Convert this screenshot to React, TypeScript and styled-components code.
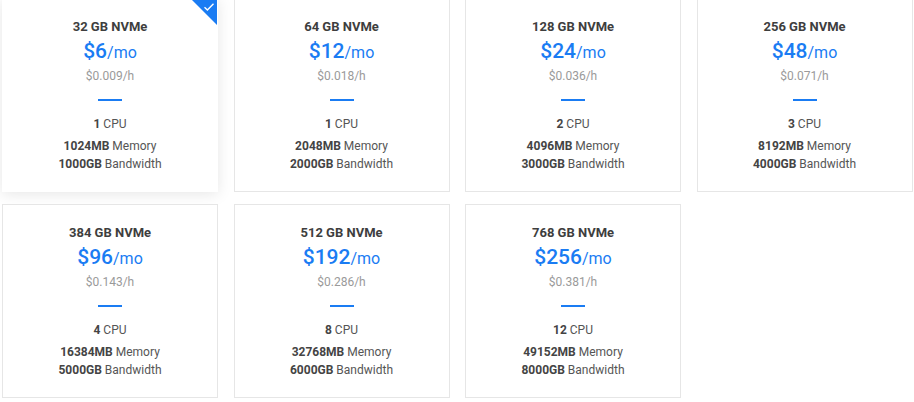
import React from "react";
import styled, { createGlobalStyle, css } from "styled-components";

const Global = createGlobalStyle`
  html, body { margin: 0; padding: 0; background: #ffffff; }
  body { font-family: Roboto, "Noto Sans", "Liberation Sans", sans-serif; overflow: hidden; }
`;

const Grid = styled.div`
  display: grid;
  grid-template-columns: repeat(4, 216px);
  grid-auto-rows: 194px;
  column-gap: 15.5px;
  row-gap: 12px;
  padding-left: 2px;
  margin-top: -2px;
`;

const Card = styled.div<{ $selected?: boolean }>`
  position: relative;
  box-sizing: border-box;
  background: #ffffff;
  border: 1px solid #e6e6e6;
  display: flex;
  flex-direction: column;
  align-items: center;
  padding-top: 19px;
  overflow: hidden;
  color: #444;
  ${(p) =>
    p.$selected &&
    css`
      border-color: transparent;
      box-shadow: 0 2px 14px rgba(0, 0, 0, 0.1);
    `}
`;

const Corner = styled.div`
  position: absolute;
  top: 0;
  right: 0;
  width: 0;
  height: 0;
  border-style: solid;
  border-width: 0 26px 26px 0;
  border-color: transparent #1a7cf3 transparent transparent;
`;

const Check = styled.svg`
  position: absolute;
  top: 3px;
  right: 2px;
`;

const Title = styled.div`
  font-size: 13px;
  font-weight: 700;
  line-height: 18px;
  color: #3e3e3e;
`;

const Price = styled.div`
  margin-top: 1px;
  line-height: 28px;
  color: #1a7cf3;
  font-size: 21px;
  font-weight: 500;
`;

const Per = styled.span`
  font-size: 16px;
  font-weight: 400;
`;

const Hourly = styled.div`
  margin-top: 1px;
  line-height: 16px;
  font-size: 12px;
  color: #9a9a9a;
`;

const Divider = styled.div`
  margin-top: 15px;
  width: 24px;
  height: 2px;
  background: #1a7cf3;
`;

const Spec = styled.div<{ $gap: number }>`
  margin-top: ${(p) => p.$gap}px;
  line-height: 18px;
  font-size: 12px;
  color: #555;
  b { font-weight: 700; color: #444; }
`;

type Plan = { disk: string; price: number; hour: string; cpu: number; mem: number; bw: number };

const plans: Plan[] = [
  { disk: "32 GB NVMe", price: 6, hour: "0.009", cpu: 1, mem: 1024, bw: 1000 },
  { disk: "64 GB NVMe", price: 12, hour: "0.018", cpu: 1, mem: 2048, bw: 2000 },
  { disk: "128 GB NVMe", price: 24, hour: "0.036", cpu: 2, mem: 4096, bw: 3000 },
  { disk: "256 GB NVMe", price: 48, hour: "0.071", cpu: 3, mem: 8192, bw: 4000 },
  { disk: "384 GB NVMe", price: 96, hour: "0.143", cpu: 4, mem: 16384, bw: 5000 },
  { disk: "512 GB NVMe", price: 192, hour: "0.286", cpu: 8, mem: 32768, bw: 6000 },
  { disk: "768 GB NVMe", price: 256, hour: "0.381", cpu: 12, mem: 49152, bw: 8000 },
];

export default function App() {
  return (
    <>
      <Global />
      <Grid>
        {plans.map((p, i) => (
          <Card key={p.disk} $selected={i === 0}>
            {i === 0 && (
              <>
                <Corner />
                <Check width="12" height="10" viewBox="0 0 12 10">
                  <path d="M1.5 5.2 L4.4 8 L10.5 1.8" fill="none" stroke="#fff" strokeWidth="1.4" />
                </Check>
              </>
            )}
            <Title>{p.disk}</Title>
            <Price>
              ${p.price}
              <Per>/mo</Per>
            </Price>
            <Hourly>${p.hour}/h</Hourly>
            <Divider />
            <Spec $gap={14}>
              <b>{p.cpu}</b> CPU
            </Spec>
            <Spec $gap={4}>
              <b>{p.mem}MB</b> Memory
            </Spec>
            <Spec $gap={0}>
              <b>{p.bw}GB</b> Bandwidth
            </Spec>
          </Card>
        ))}
      </Grid>
    </>
  );
}
